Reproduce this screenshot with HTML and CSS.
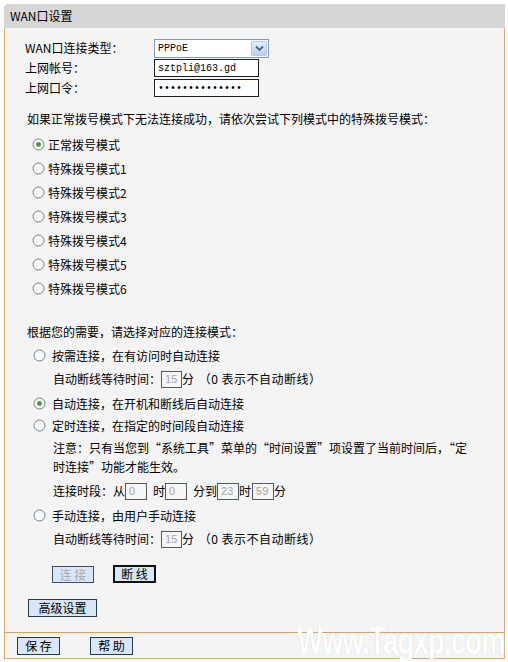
FILE: index.html
```html
<!DOCTYPE html>
<html lang="zh-CN">
<head>
<meta charset="utf-8">
<title>WAN口设置</title>
<link rel="stylesheet" href="styles.css">
</head>
<body>
<div class="panel">
  <div class="titlebar">WAN口设置</div>
  <div class="content">
    <div class="fields">
      <div class="frow"><span class="lbl">WAN口连接类型：</span>
        <div class="select"><span class="sel-text">PPPoE</span><span class="arrow"><svg width="9" height="7" viewBox="0 0 9 7"><path d="M1 1.5 L4.5 5 L8 1.5" fill="none" stroke="#4d6185" stroke-width="1.8"/></svg></span></div>
      </div>
      <div class="frow"><span class="lbl">上网帐号：</span><input class="tf" type="text" value="sztpli@163.gd" readonly></div>
      <div class="frow"><span class="lbl">上网口令：</span><input class="tf" type="password" value="xxxxxxxxxxxxxx" readonly></div>
    </div>
    <p class="note">如果正常拨号模式下无法连接成功，请依次尝试下列模式中的特殊拨号模式：</p>
    <div class="radios">
      <div class="opt"><svg class="rb" width="13" height="13" viewBox="0 0 13 13"><circle cx="6.5" cy="6.5" r="5.5" fill="#fafafa" stroke="#6e7e8c"/><circle cx="6.5" cy="6.5" r="2.4" fill="#3c9f3c"/></svg><span>正常拨号模式</span></div>
      <div class="opt"><svg class="rb" width="13" height="13" viewBox="0 0 13 13"><circle cx="6.5" cy="6.5" r="5.5" fill="#fafafa" stroke="#6e7e8c"/></svg><span>特殊拨号模式1</span></div>
      <div class="opt"><svg class="rb" width="13" height="13" viewBox="0 0 13 13"><circle cx="6.5" cy="6.5" r="5.5" fill="#fafafa" stroke="#6e7e8c"/></svg><span>特殊拨号模式2</span></div>
      <div class="opt"><svg class="rb" width="13" height="13" viewBox="0 0 13 13"><circle cx="6.5" cy="6.5" r="5.5" fill="#fafafa" stroke="#6e7e8c"/></svg><span>特殊拨号模式3</span></div>
      <div class="opt"><svg class="rb" width="13" height="13" viewBox="0 0 13 13"><circle cx="6.5" cy="6.5" r="5.5" fill="#fafafa" stroke="#6e7e8c"/></svg><span>特殊拨号模式4</span></div>
      <div class="opt"><svg class="rb" width="13" height="13" viewBox="0 0 13 13"><circle cx="6.5" cy="6.5" r="5.5" fill="#fafafa" stroke="#6e7e8c"/></svg><span>特殊拨号模式5</span></div>
      <div class="opt"><svg class="rb" width="13" height="13" viewBox="0 0 13 13"><circle cx="6.5" cy="6.5" r="5.5" fill="#fafafa" stroke="#6e7e8c"/></svg><span>特殊拨号模式6</span></div>
    </div>
    <p class="note2">根据您的需要，请选择对应的连接模式：</p>
    <div class="modes">
      <div class="mode"><svg class="rb" width="13" height="13" viewBox="0 0 13 13"><circle cx="6.5" cy="6.5" r="5.5" fill="#fafafa" stroke="#6e7e8c"/></svg><span>按需连接，在有访问时自动连接</span></div>
      <div class="sub">自动断线等待时间：<span class="tin">15</span>分 <span class="paren">（0 表示不自动断线）</span></div>
      <div class="mode"><svg class="rb" width="13" height="13" viewBox="0 0 13 13"><circle cx="6.5" cy="6.5" r="5.5" fill="#fafafa" stroke="#6e7e8c"/><circle cx="6.5" cy="6.5" r="2.4" fill="#3c9f3c"/></svg><span>自动连接，在开机和断线后自动连接</span></div>
      <div class="mode"><svg class="rb" width="13" height="13" viewBox="0 0 13 13"><circle cx="6.5" cy="6.5" r="5.5" fill="#fafafa" stroke="#6e7e8c"/></svg><span>定时连接，在指定的时间段自动连接</span></div>
      <p class="notice">注意：只有当您到“系统工具”菜单的“时间设置”项设置了当前时间后，“定<br>时连接”功能才能生效。</p>
      <div class="sub time">连接时段：从<span class="tin">0</span><span class="gap">时</span><span class="tin">0</span><span class="gap">分到</span><span class="tin">23</span>时<span class="tin g1">59</span>分</div>
      <div class="mode"><svg class="rb" width="13" height="13" viewBox="0 0 13 13"><circle cx="6.5" cy="6.5" r="5.5" fill="#fafafa" stroke="#6e7e8c"/></svg><span>手动连接，由用户手动连接</span></div>
      <div class="sub">自动断线等待时间：<span class="tin">15</span>分 <span class="paren">（0 表示不自动断线）</span></div>
    </div>
    <div class="btnrow">
      <button class="btn dis" type="button">连 接</button>
      <button class="btn act" type="button">断 线</button>
    </div>
    <div class="advrow"><button class="btn adv" type="button">高级设置</button></div>
  </div>
  <div class="footer">
    <button class="btn foot" type="button">保 存</button>
    <button class="btn foot" type="button">帮 助</button>
  </div>
  <div class="watermark">Www.Tagxp.com</div>
</div>
</body>
</html>
```
FILE: styles.css
```css
body {
  margin: 0;
  background: #fff;
  color: #000;
  font-family: "Noto Sans CJK SC", "Liberation Sans", sans-serif;
  font-size: 12px;
}
p { margin: 0; }

.panel {
  position: relative;
  margin: 4px 0 0 4px;
  width: 501px;
}

.titlebar {
  height: 24px;
  line-height: 24px;
  background: #d6d6d6;
  border-radius: 4px 0 0 0;
  padding-left: 6px;
}

.content {
  background: #f4f4f4;
  border-left: 1px solid #e0a96c;
  border-right: 1px solid #e0a96c;
  padding: 10px 0 15px;
}

.frow {
  display: flex;
  align-items: center;
  height: 20px;
  padding-left: 20px;
}
.lbl {
  width: 129px;
  line-height: 18px;
}

.select {
  box-sizing: border-box;
  width: 115px;
  height: 19px;
  border: 1px solid #7f9db9;
  background: #fff;
  display: flex;
  align-items: center;
  justify-content: space-between;
  padding-left: 3px;
}
.sel-text {
  font-family: "Liberation Mono", monospace;
  font-size: 10px;
}
.arrow {
  box-sizing: border-box;
  width: 16px;
  height: 15px;
  margin-right: 1px;
  border: 1px solid #b4c8ec;
  border-radius: 2px;
  background: linear-gradient(#e6eefc, #bccff3);
  display: flex;
  align-items: center;
  justify-content: center;
}

.tf {
  box-sizing: border-box;
  width: 105px;
  height: 18px;
  margin: 0;
  padding: 0 3px;
  border: 1px solid #1f1f1f;
  background: #fff;
  font-family: "Liberation Mono", monospace;
  font-size: 10px;
  color: #000;
  outline: none;
}

.note {
  margin-top: 12px;
  height: 18px;
  line-height: 18px;
  padding-left: 22px;
}

.radios { margin-top: 4px; }
.opt {
  display: flex;
  align-items: center;
  height: 24px;
  padding-left: 27px;
}
.opt .rb { margin-right: 3px; }

.note2 {
  margin-top: 23px;
  height: 18px;
  line-height: 18px;
  padding-left: 22px;
}

.modes { margin-top: 3px; }
.mode {
  display: flex;
  align-items: center;
  height: 22px;
  padding-left: 28px;
}
.mode .rb { margin-right: 6px; }

.sub {
  height: 26px;
  line-height: 26px;
  padding-left: 48px;
  white-space: nowrap;
}
.sub.time { margin-top: 2px; }
.paren { margin-left: 2px; letter-spacing: 0.5px; }

.tin {
  box-sizing: border-box;
  display: inline-block;
  vertical-align: middle;
  width: 21px;
  height: 17px;
  line-height: 15px;
  border: 1px solid #4e5c5c;
  background: #f6f6f6;
  color: #a6a6a6;
  font-family: "Liberation Sans", sans-serif;
  font-size: 11px;
  padding-left: 3px;
  margin-top: -2px;
}
.time .tin { width: 22px; }
.time .gap { margin-left: 6px; }
.tin.g1 { margin-left: 1px; }

.notice {
  margin-top: 2px;
  padding-left: 48px;
  line-height: 19px;
}

.btn {
  box-sizing: border-box;
  margin: 0;
  padding: 0;
  background: #d8e7f8;
  border: 1px solid #25384d;
  font-family: "Noto Sans CJK SC", sans-serif;
  font-size: 12px;
  line-height: 14px;
  color: #000;
  text-align: center;
}

.btnrow {
  display: flex;
  align-items: flex-end;
  gap: 19px;
  margin-top: 13px;
  padding-left: 47px;
  height: 18px;
}
.btn.dis {
  width: 42px;
  height: 17px;
  color: #a9a9a9;
  border-color: #36506a;
}
.btn.act {
  width: 43px;
  height: 18px;
  border: 2px solid #111;
}

.advrow {
  margin-top: 16px;
  padding-left: 23px;
}
.btn.adv {
  width: 69px;
  height: 18px;
}

.footer {
  box-sizing: border-box;
  height: 27px;
  background: #f4f4f4;
  border: 1px solid #e0a96c;
  border-top-color: #d9a062;
  display: flex;
  align-items: center;
  gap: 30px;
  padding-left: 12px;
}
.btn.foot {
  width: 43px;
  height: 18px;
}

.watermark {
  position: absolute;
  right: 0;
  bottom: 0;
  font-family: "Liberation Sans", sans-serif;
  font-weight: bold;
  font-size: 38px;
  color: #fff;
  text-shadow: 0 0 1px #c8c8c8;
  transform: scaleX(0.72);
  transform-origin: right bottom;
  white-space: nowrap;
  line-height: 36px;
  letter-spacing: -1px;
}
```
